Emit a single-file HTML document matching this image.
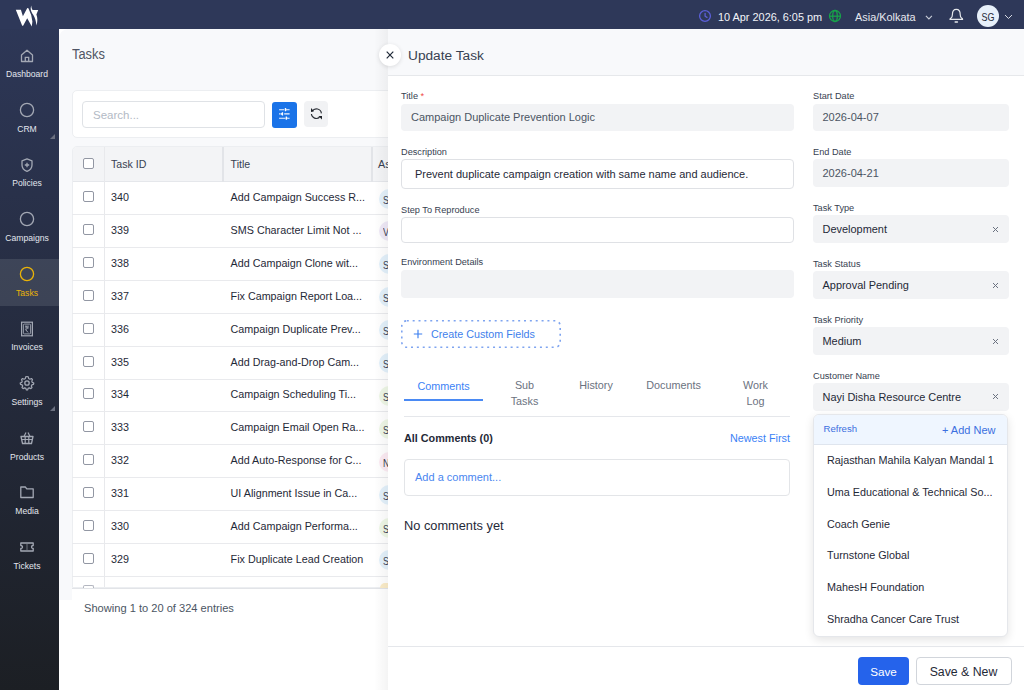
<!DOCTYPE html><html><head><meta charset="utf-8"><style>
*{box-sizing:border-box;margin:0;padding:0}
html,body{width:1024px;height:690px;overflow:hidden;background:#fff;font-family:"Liberation Sans",sans-serif;color:#1f2937}
.t{position:absolute;white-space:nowrap}
.b{position:absolute}
#side{position:absolute;left:0;top:0;width:59px;height:690px;background:linear-gradient(#2e3859,#1c1f24)}
#topbar{position:absolute;left:0;top:0;width:1024px;height:29px;background:#2e3859}
.nl{position:absolute;left:-0.5px;width:55px;height:12px;line-height:12px;text-align:center;font-size:8.6px;color:#e3e6ee}
.ni{position:absolute;left:19px;width:16px;height:16px}
.tri{position:absolute;left:50px;width:0;height:0;border-left:5px solid transparent;border-bottom:5px solid #6b7080}
#main{position:absolute;left:59px;top:29px;width:965px;height:571px;background:#f8f9fb;border-top-left-radius:9px}
.cb{position:absolute;width:11px;height:11px;border:1.2px solid #9297a3;border-radius:2px;background:#fff}
.cell{position:absolute;font-size:10.75px;height:14px;line-height:14px;color:#1f2937;white-space:nowrap}
.lbl{position:absolute;font-size:9.2px;height:12px;line-height:12px;color:#374151;white-space:nowrap}
.inp{position:absolute;border-radius:4px;background:#f2f3f5}
.inpb{position:absolute;border-radius:4px;background:#fff;border:1px solid #dfe1e5}
.itx{position:absolute;font-size:11px;height:14px;line-height:14px;color:#4b5563;white-space:nowrap}
.stx{position:absolute;font-size:10.95px;height:14px;line-height:14px;color:#1f2937;white-space:nowrap}
.x{position:absolute;width:7px;height:7px}
.opt{position:absolute;left:827px;font-size:10.8px;height:14px;line-height:14px;color:#1f2937;white-space:nowrap}
.tab{position:absolute;font-size:10.8px;line-height:16px;color:#6b7280;text-align:center;white-space:normal}
</style></head><body>
<div id="side"></div>
<div id="topbar"></div>
<svg class="b" style="left:12px;top:4px;width:30px;height:25px" viewBox="12 4 30 25">
<path d="M15.8 9.8 L20.9 9.8 L22.9 16.2 L27.3 7.9 L28.4 8.2 L31.2 14.9 L32.4 21.5 L31.8 26.6 L27.2 18.2 L23.1 25.8 L22.2 25.8 Z" fill="#fff"/>
<path d="M31.4 5.6 C31.2 7.5 31.8 9 32.6 10.1 L38.2 10.1 L36.4 14.5 C37.6 17.5 37.8 21.5 36.4 25.6 C36 21 35 17.5 33.2 14.8 C31.2 12 29.8 9 31.4 5.6 Z" fill="#fff"/>
</svg>
<svg class="ni" style="top:47.6px" viewBox="0 0 16 16"><path d="M2.5 7 L8 2.2 L13.5 7 V13.5 H2.5 Z" fill="none" stroke="#a3a8b4" stroke-width="1.3" stroke-linejoin="round"/><path d="M6.3 13.5 V9.3 H9.7 V13.5" fill="none" stroke="#a3a8b4" stroke-width="1.3"/></svg>
<div class="nl" style="top:68.1px;color:#e3e6ee">Dashboard</div>
<svg class="ni" style="top:102.2px" viewBox="0 0 16 16"><circle cx="8" cy="8" r="6.6" fill="none" stroke="#a3a8b4" stroke-width="1.3"/></svg>
<div class="nl" style="top:122.7px;color:#e3e6ee">CRM</div>
<svg class="ni" style="top:156.8px" viewBox="0 0 16 16"><path d="M8 1.8 L13 3.8 V8 C13 11 10.8 13.3 8 14.4 C5.2 13.3 3 11 3 8 V3.8 Z" fill="none" stroke="#a3a8b4" stroke-width="1.3" stroke-linejoin="round"/><path d="M8 5.8 V10.2 M5.8 8 H10.2" stroke="#a3a8b4" stroke-width="1.3"/></svg>
<div class="nl" style="top:177.4px;color:#e3e6ee">Policies</div>
<svg class="ni" style="top:211.4px" viewBox="0 0 16 16"><circle cx="8" cy="8" r="6.6" fill="none" stroke="#a3a8b4" stroke-width="1.3"/></svg>
<div class="nl" style="top:232.0px;color:#e3e6ee">Campaigns</div>
<div class="b" style="left:0;top:258.7px;width:59px;height:47px;background:rgba(255,255,255,0.105)"></div>
<svg class="ni" style="top:266.0px" viewBox="0 0 16 16"><circle cx="8" cy="8" r="6.6" fill="none" stroke="#eab308" stroke-width="1.3"/></svg>
<div class="nl" style="top:286.6px;color:#eab308">Tasks</div>
<svg class="ni" style="top:320.6px" viewBox="0 0 16 16"><rect x="2.6" y="1.2" width="10.8" height="13.6" fill="none" stroke="#a3a8b4" stroke-width="1.2"/><rect x="4.4" y="3.1" width="7.2" height="9.8" rx="1" fill="none" stroke="#a3a8b4" stroke-width="0.9"/><path d="M6.2 5.2 H9.8 M6.2 6.9 H9.8 M6.5 5.2 C8.8 5.2 8.8 8.6 6.5 8.6 L9 11.4" fill="none" stroke="#a3a8b4" stroke-width="1"/></svg>
<div class="nl" style="top:341.3px;color:#e3e6ee">Invoices</div>
<svg class="ni" style="top:375.2px" viewBox="0 0 16 16"><circle cx="8" cy="8" r="2.2" fill="none" stroke="#a3a8b4" stroke-width="1.3"/><path d="M8 1.5 L9.3 1.8 L9.6 3.5 L10.9 4.2 L12.5 3.5 L13.5 4.6 L12.8 6.2 L13.3 7.4 L14.8 8 L14.5 9.4 L12.9 9.8 L12.3 11 L13 12.6 L11.9 13.6 L10.3 12.9 L9.1 13.4 L8.6 15 L7.4 15 L6.9 13.4 L5.7 12.9 L4.1 13.6 L3 12.6 L3.7 11 L3.1 9.8 L1.5 9.4 L1.2 8 L2.7 7.4 L3.2 6.2 L2.5 4.6 L3.5 3.5 L5.1 4.2 L6.4 3.5 L6.7 1.8 Z" fill="none" stroke="#a3a8b4" stroke-width="1.2" stroke-linejoin="round"/></svg>
<div class="nl" style="top:395.9px;color:#e3e6ee">Settings</div>
<svg class="ni" style="top:429.8px" viewBox="0 0 16 16"><path d="M2 6.5 H14 L12.5 13.5 H3.5 Z" fill="none" stroke="#a3a8b4" stroke-width="1.3" stroke-linejoin="round"/><path d="M5 6.5 L7 2.5 M11 6.5 L9 2.5 M2.6 9.5 H13.4 M6.2 6.5 V13.5 M9.8 6.5 V13.5" fill="none" stroke="#a3a8b4" stroke-width="1.2"/></svg>
<div class="nl" style="top:450.5px;color:#e3e6ee">Products</div>
<svg class="ni" style="top:484.4px" viewBox="0 0 16 16"><path d="M1.8 3 H6.3 L7.8 4.8 H14.2 V13.5 H1.8 Z" fill="none" stroke="#a3a8b4" stroke-width="1.3" stroke-linejoin="round"/></svg>
<div class="nl" style="top:505.1px;color:#e3e6ee">Media</div>
<svg class="ni" style="top:539.0px" viewBox="0 0 16 16"><path d="M1.8 4 H14.2 V6.5 C13 6.5 12.5 7.3 12.5 8 C12.5 8.7 13 9.5 14.2 9.5 V12 H1.8 V9.5 C3 9.5 3.5 8.7 3.5 8 C3.5 7.3 3 6.5 1.8 6.5 Z" fill="none" stroke="#a3a8b4" stroke-width="1.3" stroke-linejoin="round"/><path d="M8 5.5 V6.5 M8 7.5 V8.5 M8 9.5 V10.5" stroke="#a3a8b4" stroke-width="1.2"/></svg>
<div class="nl" style="top:559.8px;color:#e3e6ee">Tickets</div>
<div class="tri" style="top:133.5px"></div>
<div class="tri" style="top:406px"></div>
<svg class="b" style="left:697.5px;top:9.1px;width:14px;height:14px" viewBox="0 0 14 14"><circle cx="7" cy="7" r="5.4" fill="none" stroke="#5b5fd8" stroke-width="1.3"/><path d="M7.1 4.3 V7.3 L9 8.4" fill="none" stroke="#5b5fd8" stroke-width="1.3" stroke-linecap="round" stroke-linejoin="round"/></svg>
<div class="t" style="left:718px;top:9.5px;font-size:10.9px;line-height:14px;color:#f1f3f8">10 Apr 2026, 6:05 pm</div>
<svg class="b" style="left:828px;top:9px;width:14px;height:14px" viewBox="0 0 14 14"><g fill="none" stroke="#17a34a" stroke-width="1.3"><circle cx="7" cy="7" r="5.5"/><ellipse cx="7" cy="7" rx="2.3" ry="5.5"/><path d="M1.5 7.2 H12.5"/></g></svg>
<div class="t" style="left:855px;top:9.8px;font-size:10.9px;line-height:14px;color:#e6e9f0">Asia/Kolkata</div>
<svg class="b" style="left:924.5px;top:14.5px;width:8px;height:5px" viewBox="0 0 8 5"><path d="M0.9 0.9 L3.9 3.9 L6.9 0.9" fill="none" stroke="#c9cdd8" stroke-width="1.1"/></svg>
<svg class="b" style="left:948px;top:8px;width:16px;height:16px" viewBox="0 0 16 16"><path d="M2 11.4 Q2 10.7 3 10.1 Q4.4 9.2 4.4 6.5 Q4.4 1.3 8.3 1.3 Q12.2 1.3 12.2 6.5 Q12.2 9.2 13.6 10.1 Q14.6 10.7 14.6 11.4 Z" fill="none" stroke="#e5e7eb" stroke-width="1.2" stroke-linejoin="round"/><path d="M7.2 14 H9.4" stroke="#e5e7eb" stroke-width="1.5" stroke-linecap="round"/></svg>
<div class="b" style="left:977px;top:5px;width:22px;height:22px;border-radius:50%;background:#e7f0fa"></div>
<div class="t" style="left:977px;top:10px;width:22px;text-align:center;font-size:11.5px;line-height:14px;color:#1f2937;transform:scaleX(0.78)">SG</div>
<svg class="b" style="left:1004px;top:14px;width:9px;height:6px" viewBox="0 0 9 6"><path d="M1 1 L4.5 4.5 L8 1" fill="none" stroke="#d5d9e2" stroke-width="1"/></svg>
<div id="main"></div>
<div class="t" style="left:72px;top:45.3px;font-size:15.5px;line-height:18px;color:#4f5563;transform:scaleX(0.83);transform-origin:0 0">Tasks</div>
<div class="b" style="left:72px;top:90px;width:330px;height:48px;background:#fff;border:1px solid #eceef1;border-radius:5px"></div>
<div class="b" style="left:82px;top:101px;width:183px;height:27px;background:#fff;border:1px solid #dfe2e6;border-radius:4px"></div>
<div class="t" style="left:93px;top:107.5px;font-size:11.5px;line-height:14px;color:#b3bac5">Search...</div>
<div class="b" style="left:272px;top:101.5px;width:25px;height:26px;background:#1a73e8;border-radius:3px"></div>
<svg class="b" style="left:270px;top:100px;width:30px;height:30px" viewBox="270 100 30 30"><g stroke="#fff" stroke-width="1.1" opacity="0.95"><path d="M279.1 109.7 H284.3 M286.6 109.7 H289.6 M279.1 113.9 H280.6 M284.2 113.9 H289.6 M279.1 118.2 H285.6 M287.6 118.2 H289.6"/></g><g fill="#fff"><path d="M284.8 108.1 L285.9 108.1 L286.8 109.7 L285.9 111.3 L284.8 111.3 Z"/><path d="M283.1 112.2 L282.1 112.2 L280.7 113.9 L282.1 115.6 L283.1 115.6 Z"/><path d="M285.7 116.6 L286.8 116.6 L287.7 118.2 L286.8 119.8 L285.7 119.8 Z"/></g></svg>
<div class="b" style="left:304px;top:101px;width:24px;height:26px;background:#f1f2f4;border-radius:4px"></div>
<svg class="b" style="left:306px;top:104px;width:20px;height:20px" viewBox="306 104 20 20"><g fill="none" stroke="#2b2f36" stroke-width="1.15"><path d="M312.2 111.2 A5 5 0 0 1 321.4 113.4"/><path d="M311.4 114 A5 5 0 0 0 319.6 117.3"/></g><g fill="#1f2329"><path d="M311 107.9 L311 112.1 L314 111.2 Z"/><path d="M318.4 116.1 L322 116.1 L322 119.6 Z"/></g></svg>
<div class="b" style="left:72px;top:145.5px;width:330px;height:442.5px;background:#fff;border:1px solid #eceef1;border-radius:5px 5px 0 0;overflow:hidden">
<div class="b" style="left:0;top:0;width:330px;height:35px;background:#f3f4f6;border-bottom:1px solid #e5e7eb"></div>
<div class="b" style="left:31px;top:0;width:1px;height:442px;background:#e8e9ec"></div>
<div class="b" style="left:149px;top:0;width:2px;height:35px;background:#e2e4e8"></div>
<div class="b" style="left:297.5px;top:0;width:2px;height:35px;background:#e2e4e8"></div>
</div>
<div class="cb" style="left:83px;top:158px"></div>
<div class="cell" style="left:111px;top:157px;color:#374151;font-size:10.6px">Task ID</div>
<div class="cell" style="left:230.6px;top:157px;color:#374151;font-size:10.6px">Title</div>
<div class="cell" style="left:378px;top:157px;color:#374151">As</div>
<div class="b" style="left:72px;top:214.00px;width:316px;height:1px;background:#e9eaed"></div>
<div class="cb" style="left:83px;top:191.0px"></div>
<div class="cell" style="left:111px;top:190.0px">340</div>
<div class="cell" style="left:230.6px;top:190.0px">Add Campaign Success R...</div>
<div class="b" style="left:378.5px;top:188.5px;width:20px;height:20px;border-radius:50%;background:#e3f1fb"></div>
<div class="cell" style="left:382.8px;top:192.5px;font-size:10.5px;color:#374151;transform:scaleX(0.85);transform-origin:0 0">SG</div>
<div class="b" style="left:72px;top:246.90px;width:316px;height:1px;background:#e9eaed"></div>
<div class="cb" style="left:83px;top:223.9px"></div>
<div class="cell" style="left:111px;top:222.9px">339</div>
<div class="cell" style="left:230.6px;top:222.9px">SMS Character Limit Not ...</div>
<div class="b" style="left:378.5px;top:221.4px;width:20px;height:20px;border-radius:50%;background:#efe9f7"></div>
<div class="cell" style="left:382.8px;top:225.4px;font-size:10.5px;color:#374151;transform:scaleX(0.85);transform-origin:0 0">V</div>
<div class="b" style="left:72px;top:279.80px;width:316px;height:1px;background:#e9eaed"></div>
<div class="cb" style="left:83px;top:256.8px"></div>
<div class="cell" style="left:111px;top:255.8px">338</div>
<div class="cell" style="left:230.6px;top:255.8px">Add Campaign Clone wit...</div>
<div class="b" style="left:378.5px;top:254.3px;width:20px;height:20px;border-radius:50%;background:#e3f1fb"></div>
<div class="cell" style="left:382.8px;top:258.3px;font-size:10.5px;color:#374151;transform:scaleX(0.85);transform-origin:0 0">SG</div>
<div class="b" style="left:72px;top:312.70px;width:316px;height:1px;background:#e9eaed"></div>
<div class="cb" style="left:83px;top:289.7px"></div>
<div class="cell" style="left:111px;top:288.7px">337</div>
<div class="cell" style="left:230.6px;top:288.7px">Fix Campaign Report Loa...</div>
<div class="b" style="left:378.5px;top:287.2px;width:20px;height:20px;border-radius:50%;background:#e3f1fb"></div>
<div class="cell" style="left:382.8px;top:291.2px;font-size:10.5px;color:#374151;transform:scaleX(0.85);transform-origin:0 0">SG</div>
<div class="b" style="left:72px;top:345.60px;width:316px;height:1px;background:#e9eaed"></div>
<div class="cb" style="left:83px;top:322.6px"></div>
<div class="cell" style="left:111px;top:321.6px">336</div>
<div class="cell" style="left:230.6px;top:321.6px">Campaign Duplicate Prev...</div>
<div class="b" style="left:378.5px;top:320.1px;width:20px;height:20px;border-radius:50%;background:#e3f1fb"></div>
<div class="cell" style="left:382.8px;top:324.1px;font-size:10.5px;color:#374151;transform:scaleX(0.85);transform-origin:0 0">SG</div>
<div class="b" style="left:72px;top:378.50px;width:316px;height:1px;background:#e9eaed"></div>
<div class="cb" style="left:83px;top:355.5px"></div>
<div class="cell" style="left:111px;top:354.5px">335</div>
<div class="cell" style="left:230.6px;top:354.5px">Add Drag-and-Drop Cam...</div>
<div class="b" style="left:378.5px;top:353.0px;width:20px;height:20px;border-radius:50%;background:#e3f1fb"></div>
<div class="cell" style="left:382.8px;top:357.0px;font-size:10.5px;color:#374151;transform:scaleX(0.85);transform-origin:0 0">SG</div>
<div class="b" style="left:72px;top:411.40px;width:316px;height:1px;background:#e9eaed"></div>
<div class="cb" style="left:83px;top:388.4px"></div>
<div class="cell" style="left:111px;top:387.4px">334</div>
<div class="cell" style="left:230.6px;top:387.4px">Campaign Scheduling Ti...</div>
<div class="b" style="left:378.5px;top:385.9px;width:20px;height:20px;border-radius:50%;background:#eef7e6"></div>
<div class="cell" style="left:382.8px;top:389.9px;font-size:10.5px;color:#374151;transform:scaleX(0.85);transform-origin:0 0">S</div>
<div class="b" style="left:72px;top:444.30px;width:316px;height:1px;background:#e9eaed"></div>
<div class="cb" style="left:83px;top:421.3px"></div>
<div class="cell" style="left:111px;top:420.3px">333</div>
<div class="cell" style="left:230.6px;top:420.3px">Campaign Email Open Ra...</div>
<div class="b" style="left:378.5px;top:418.8px;width:20px;height:20px;border-radius:50%;background:#eef7e6"></div>
<div class="cell" style="left:382.8px;top:422.8px;font-size:10.5px;color:#374151;transform:scaleX(0.85);transform-origin:0 0">S</div>
<div class="b" style="left:72px;top:477.20px;width:316px;height:1px;background:#e9eaed"></div>
<div class="cb" style="left:83px;top:454.2px"></div>
<div class="cell" style="left:111px;top:453.2px">332</div>
<div class="cell" style="left:230.6px;top:453.2px">Add Auto-Response for C...</div>
<div class="b" style="left:378.5px;top:451.7px;width:20px;height:20px;border-radius:50%;background:#fcebf3"></div>
<div class="cell" style="left:382.8px;top:455.7px;font-size:10.5px;color:#374151;transform:scaleX(0.85);transform-origin:0 0">N</div>
<div class="b" style="left:72px;top:510.10px;width:316px;height:1px;background:#e9eaed"></div>
<div class="cb" style="left:83px;top:487.1px"></div>
<div class="cell" style="left:111px;top:486.1px">331</div>
<div class="cell" style="left:230.6px;top:486.1px">UI Alignment Issue in Ca...</div>
<div class="b" style="left:378.5px;top:484.6px;width:20px;height:20px;border-radius:50%;background:#e3f1fb"></div>
<div class="cell" style="left:382.8px;top:488.6px;font-size:10.5px;color:#374151;transform:scaleX(0.85);transform-origin:0 0">SG</div>
<div class="b" style="left:72px;top:543.00px;width:316px;height:1px;background:#e9eaed"></div>
<div class="cb" style="left:83px;top:520.0px"></div>
<div class="cell" style="left:111px;top:519.0px">330</div>
<div class="cell" style="left:230.6px;top:519.0px">Add Campaign Performa...</div>
<div class="b" style="left:378.5px;top:517.5px;width:20px;height:20px;border-radius:50%;background:#eef7e6"></div>
<div class="cell" style="left:382.8px;top:521.5px;font-size:10.5px;color:#374151;transform:scaleX(0.85);transform-origin:0 0">S</div>
<div class="b" style="left:72px;top:575.90px;width:316px;height:1px;background:#e9eaed"></div>
<div class="cb" style="left:83px;top:552.9px"></div>
<div class="cell" style="left:111px;top:551.9px">329</div>
<div class="cell" style="left:230.6px;top:551.9px">Fix Duplicate Lead Creation</div>
<div class="b" style="left:378.5px;top:550.4px;width:20px;height:20px;border-radius:50%;background:#e3f1fb"></div>
<div class="cell" style="left:382.8px;top:554.4px;font-size:10.5px;color:#374151;transform:scaleX(0.85);transform-origin:0 0">SG</div>
<div class="cb" style="left:83px;top:585.2px;height:4px;border-bottom:none;border-radius:2px 2px 0 0;border-color:#b3b6c0"></div>
<div class="b" style="left:380px;top:583px;width:20px;height:5px;border-radius:10px 10px 0 0;background:#fbecc8"></div>
<div class="b" style="left:72px;top:588px;width:330px;height:102px;background:#fff;border-top:1.5px solid #e2e4e8"></div>
<div class="t" style="left:84px;top:601px;font-size:11.1px;line-height:14px;color:#4b5563">Showing 1 to 20 of 324 entries</div>
<div class="b" style="left:374px;top:29px;width:14px;height:661px;background:linear-gradient(90deg,rgba(0,0,0,0),rgba(0,0,0,0.045))"></div>
<div class="b" style="left:388px;top:29px;width:636px;height:661px;background:#fff"></div>
<div class="b" style="left:388px;top:29px;width:636px;height:47px;background:#f8f9fb;border-bottom:1px solid #e6e8eb"></div>
<div class="b" style="left:378.5px;top:44px;width:22px;height:22px;border-radius:50%;background:#fff;box-shadow:0 1px 4px rgba(0,0,0,0.12)"></div>
<svg class="b" style="left:385.5px;top:51px;width:8px;height:8px" viewBox="0 0 8 8"><path d="M0.7 0.7 L7.3 7.3 M7.3 0.7 L0.7 7.3" stroke="#1f2937" stroke-width="1.2"/></svg>
<div class="t" style="left:408px;top:47px;font-size:13.7px;line-height:18px;color:#374151">Update Task</div>
<div class="lbl" style="left:401px;top:90.0px">Title <span style="color:#ef4444">*</span></div>
<div class="inp" style="left:401px;top:104px;width:393px;height:27px"></div>
<div class="itx" style="left:411px;top:110.4px">Campaign Duplicate Prevention Logic</div>
<div class="lbl" style="left:401px;top:146.0px">Description</div>
<div class="inpb" style="left:401px;top:159px;width:393px;height:30px"></div>
<div class="itx" style="left:415px;top:167.2px;color:#1f2937">Prevent duplicate campaign creation with same name and audience.</div>
<div class="lbl" style="left:401px;top:203.5px">Step To Reproduce</div>
<div class="inpb" style="left:401px;top:217px;width:393px;height:26px"></div>
<div class="lbl" style="left:401px;top:256.3px">Environment Details</div>
<div class="inp" style="left:401px;top:270px;width:393px;height:28px"></div>
<svg class="b" style="left:401px;top:320px;width:160px;height:28px" viewBox="0 0 160 28"><rect x="0.8" y="0.8" width="158.4" height="26.4" rx="5" fill="none" stroke="#7ea4f0" stroke-width="1.6" stroke-dasharray="2 3.86"/></svg>
<svg class="b" style="left:413px;top:329px;width:10px;height:10px" viewBox="0 0 10 10"><path d="M5 0.8 V9.2 M0.8 5 H9.2" stroke="#3b7ff0" stroke-width="1.15"/></svg>
<div class="t" style="left:431px;top:327px;font-size:10.75px;line-height:14px;color:#3f7fec">Create Custom Fields</div>
<div class="b" style="left:404px;top:416px;width:386px;height:1px;background:#e5e7eb"></div>
<div class="b" style="left:404px;top:398.5px;width:79px;height:2px;background:#4a8af4"></div>
<div class="tab" style="left:404px;top:377.5px;width:79px;color:#3b82f6">Comments</div>
<div class="tab" style="left:485px;top:377px;width:79px">Sub<br>Tasks</div>
<div class="tab" style="left:556.5px;top:376.8px;width:79px">History</div>
<div class="tab" style="left:634px;top:376.8px;width:79px">Documents</div>
<div class="tab" style="left:716px;top:377px;width:79px">Work<br>Log</div>
<div class="t" style="left:404px;top:431px;font-size:10.8px;line-height:14px;font-weight:bold;color:#1f2937">All Comments (0)</div>
<div class="t" style="left:730px;top:431px;font-size:10.8px;line-height:14px;color:#3b82f6">Newest First</div>
<div class="inpb" style="left:404px;top:458.5px;width:386px;height:37px;border-color:#e3e5e8"></div>
<div class="t" style="left:415px;top:470px;font-size:11px;line-height:14px;color:#4a86f0">Add a comment...</div>
<div class="t" style="left:404px;top:517.5px;font-size:12.8px;line-height:16px;color:#1f2937">No comments yet</div>
<div class="lbl" style="left:813px;top:90.0px">Start Date</div>
<div class="inp" style="left:813px;top:104px;width:196px;height:27px"></div>
<div class="itx" style="left:822.5px;top:110.4px">2026-04-07</div>
<div class="lbl" style="left:813px;top:146.0px">End Date</div>
<div class="inp" style="left:813px;top:159px;width:196px;height:28px"></div>
<div class="itx" style="left:822.5px;top:166px">2026-04-21</div>
<div class="lbl" style="left:813px;top:202.0px">Task Type</div>
<div class="inp" style="left:813px;top:215.0px;width:196px;height:28px"></div>
<div class="stx" style="left:822.5px;top:222.0px">Development</div>
<svg class="x" style="left:991.5px;top:225.5px" viewBox="0 0 7 7"><path d="M1 1 L6 6 M6 1 L1 6" stroke="#6b7280" stroke-width="1"/></svg>
<div class="lbl" style="left:813px;top:258.0px">Task Status</div>
<div class="inp" style="left:813px;top:271.0px;width:196px;height:28px"></div>
<div class="stx" style="left:822.5px;top:278.0px">Approval Pending</div>
<svg class="x" style="left:991.5px;top:281.5px" viewBox="0 0 7 7"><path d="M1 1 L6 6 M6 1 L1 6" stroke="#6b7280" stroke-width="1"/></svg>
<div class="lbl" style="left:813px;top:314.0px">Task Priority</div>
<div class="inp" style="left:813px;top:327.0px;width:196px;height:28px"></div>
<div class="stx" style="left:822.5px;top:334.0px">Medium</div>
<svg class="x" style="left:991.5px;top:337.5px" viewBox="0 0 7 7"><path d="M1 1 L6 6 M6 1 L1 6" stroke="#6b7280" stroke-width="1"/></svg>
<div class="lbl" style="left:813px;top:369.5px">Customer Name</div>
<div class="inp" style="left:813px;top:382.5px;width:196px;height:28px"></div>
<div class="stx" style="left:822.5px;top:389.5px">Nayi Disha Resource Centre</div>
<svg class="x" style="left:991.5px;top:393.0px" viewBox="0 0 7 7"><path d="M1 1 L6 6 M6 1 L1 6" stroke="#6b7280" stroke-width="1"/></svg>
<div class="b" style="left:813px;top:414px;width:195px;height:223px;background:#fff;border:1px solid #e5e7eb;border-radius:6px;box-shadow:0 3px 10px rgba(0,0,0,0.11);overflow:hidden"><div class="b" style="left:0;top:0;width:195px;height:30px;background:#eff6ff;border-bottom:1px solid #dfe5ee"></div></div>
<div class="t" style="left:823.5px;top:423px;font-size:9.6px;line-height:12px;color:#3b6fe0">Refresh</div>
<div class="t" style="left:942px;top:422.5px;font-size:11px;line-height:14px;color:#3b6fe0">+ Add New</div>
<div class="opt" style="top:452.8px">Rajasthan Mahila Kalyan Mandal 1</div>
<div class="opt" style="top:484.7px">Uma Educational &amp; Technical So...</div>
<div class="opt" style="top:516.5px">Coach Genie</div>
<div class="opt" style="top:548.4px">Turnstone Global</div>
<div class="opt" style="top:580.2px">MahesH Foundation</div>
<div class="opt" style="top:612.0px">Shradha Cancer Care Trust</div>
<div class="b" style="left:388px;top:646px;width:636px;height:1px;background:#e5e7eb"></div>
<div class="b" style="left:858px;top:657px;width:51px;height:28px;background:#2563eb;border-radius:4px"></div>
<div class="t" style="left:858px;top:664.8px;width:51px;text-align:center;font-size:11.7px;line-height:14px;color:#fff">Save</div>
<div class="b" style="left:915.5px;top:657px;width:96px;height:28px;background:#fff;border:1px solid #d1d5db;border-radius:4px"></div>
<div class="t" style="left:915.5px;top:664.8px;width:96px;text-align:center;font-size:12.3px;line-height:14px;color:#1f2937">Save &amp; New</div>
</body></html>
